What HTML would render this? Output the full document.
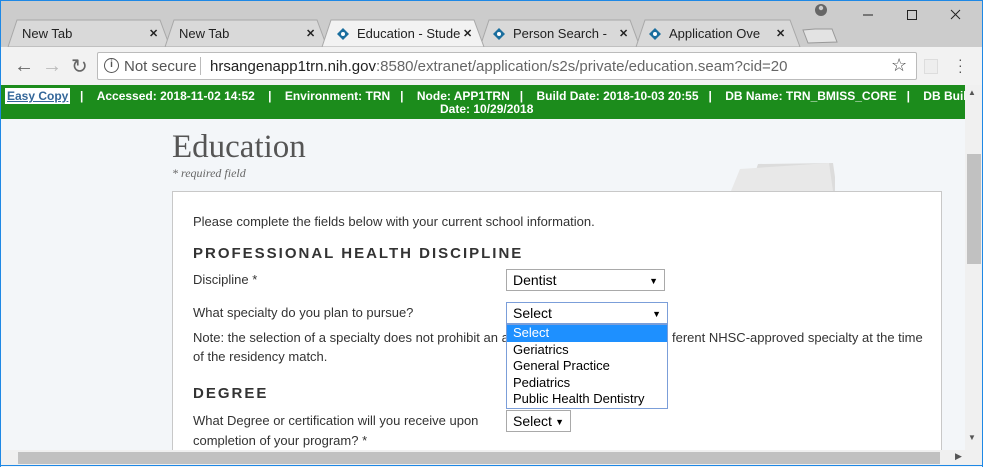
<!DOCTYPE html>
<html><head><style>
*{margin:0;padding:0;box-sizing:border-box}
body{width:983px;height:467px;overflow:hidden;font-family:"Liberation Sans",Arial,sans-serif;background:#f3f6f9;position:relative}
.a{position:absolute}
.tab{position:absolute;top:20px;height:27px;font-size:13px;color:#222;padding:6px 0 0 0;white-space:nowrap}
.x{position:absolute;font-size:11px;top:27px;color:#222;font-weight:bold}
.sel{position:absolute;background:#fff;border:1px solid #a9a9a9;font-size:14px;padding:2px 6px;color:#000}
.ar{position:absolute;right:6px;top:6px;font-size:9px}
.t{position:absolute;font-size:13px;color:#333;white-space:nowrap}
</style></head><body>
<div class="a" style="left:0;top:0;width:983px;height:47px;background:#cccccc;border:1px solid #1e88e5;border-bottom:none"></div>
<svg class="a" style="left:0;top:0" width="983" height="48">
<path d="M8 47 L17 20 L160 20 L170 47Z" fill="#d9d9d9" stroke="#a8a8a8"/>
<path d="M165 47 L174 20 L317 20 L327 47Z" fill="#d9d9d9" stroke="#a8a8a8"/>
<path d="M480 47 L489 20 L630 20 L640 47Z" fill="#d9d9d9" stroke="#a8a8a8"/>
<path d="M636 47 L645 20 L790 20 L800 47Z" fill="#d9d9d9" stroke="#a8a8a8"/>
<path d="M322 47 L331 20 L474 20 L484 47Z" fill="#f2f2f2" stroke="#a8a8a8"/>
<path d="M803 30 L815 29 L832 29 L837 42 L808 43Z" fill="#e3e3e3" stroke="#999"/>
<g fill="#1a6e9e"><path d="M343 28 l6 6 -6 6 -6 -6z"/><path d="M499 28 l6 6 -6 6 -6 -6z"/><path d="M655 28 l6 6 -6 6 -6 -6z"/></g>
<g fill="#fff"><circle cx="343" cy="34" r="2"/><circle cx="499" cy="34" r="2"/><circle cx="655" cy="34" r="2"/></g>
<circle cx="821" cy="10" r="6" fill="#666"/><circle cx="821" cy="8" r="2.2" fill="#ccc"/>
<path d="M863 15h10" stroke="#222"/><rect x="907.5" y="10.5" width="9" height="9" fill="none" stroke="#222"/>
<path d="M951 10l9 9M960 10l-9 9" stroke="#222"/>
</svg>
<div class="tab" style="left:22px">New Tab</div><div class="x" style="left:149px">✕</div>
<div class="tab" style="left:179px">New Tab</div><div class="x" style="left:306px">✕</div>
<div class="tab" style="left:357px;width:103px;overflow:hidden">Education - Studer</div><div class="x" style="left:463px">✕</div>
<div class="tab" style="left:513px;width:97px;overflow:hidden">Person Search - Bl</div><div class="x" style="left:619px">✕</div>
<div class="tab" style="left:669px;width:91px;overflow:hidden">Application Overvi</div><div class="x" style="left:776px">✕</div>
<div class="a" style="left:0;top:47px;width:983px;height:38px;background:#f2f2f2;border-left:1px solid #1e88e5;border-right:1px solid #1e88e5"></div>
<div class="a" style="left:14px;top:55px;font-size:20px;color:#666">←</div>
<div class="a" style="left:42px;top:55px;font-size:20px;color:#bbb">→</div>
<div class="a" style="left:71px;top:54px;font-size:20px;color:#666">↻</div>
<div class="a" style="left:97px;top:52px;width:820px;height:28px;background:#fff;border:1px solid #bbb;border-radius:2px"></div>
<div class="a" style="left:104px;top:58px;width:15px;height:15px;border:1.5px solid #555;border-radius:50%;font-size:10px;text-align:center;line-height:12px;font-weight:bold;color:#555">i</div>
<div class="a" style="left:124px;top:58px;font-size:15px;color:#555">Not secure</div>
<div class="a" style="left:200px;top:57px;width:1px;height:18px;background:#bbb"></div>
<div class="a" style="left:210px;top:58px;font-size:15px;color:#222">hrsangenapp1trn.nih.gov<span style="color:#666">:8580/extranet/application/s2s/private/education.seam?cid=20</span></div>
<div class="a" style="left:891px;top:55px;font-size:18px;color:#444">☆</div>
<div class="a" style="left:924px;top:59px;width:14px;height:15px;background:#eee;border:1px solid #ddd"></div>
<div class="a" style="left:958px;top:56px;font-size:14px;color:#555;line-height:6px">·<br>·<br>·</div>
<div class="a" style="left:1px;top:85px;width:964px;height:34px;background:#1c8c1c"></div>
<div class="a" style="left:5px;top:88px;width:65px;height:16px;background:#fff"></div>
<div class="a" style="left:7px;top:89px;font-size:12px;font-weight:bold;color:#336699;text-decoration:underline">Easy Copy</div>
<div class="a" style="left:80px;top:89px;width:885px;overflow:hidden;font-size:12px;font-weight:bold;color:#fff;white-space:nowrap">|&nbsp;&nbsp;&nbsp;&nbsp;Accessed: 2018-11-02 14:52&nbsp;&nbsp;&nbsp;&nbsp;|&nbsp;&nbsp;&nbsp;&nbsp;Environment: TRN&nbsp;&nbsp;&nbsp;|&nbsp;&nbsp;&nbsp;&nbsp;Node: APP1TRN&nbsp;&nbsp;&nbsp;|&nbsp;&nbsp;&nbsp;&nbsp;Build Date: 2018-10-03 20:55&nbsp;&nbsp;&nbsp;|&nbsp;&nbsp;&nbsp;&nbsp;DB Name: TRN_BMISS_CORE&nbsp;&nbsp;&nbsp;|&nbsp;&nbsp;&nbsp;&nbsp;DB Build</div>
<div class="a" style="left:440px;top:102px;font-size:12px;font-weight:bold;color:#fff">Date: 10/29/2018</div>
<div class="a" style="left:172px;top:129px;font-family:'Liberation Serif',serif;font-size:33px;color:#555">Education</div>
<div class="a" style="left:172px;top:166px;font-family:'Liberation Serif',serif;font-size:12px;font-style:italic;color:#666">* required field</div>
<svg class="a" style="left:725px;top:160px" width="110" height="32"><path d="M33 4 L108 3 L112 31 L24 31Z" fill="#dcdcdc"/><path d="M15 9 L104 3 L108 31 L6 31Z" fill="#e8e8e8"/></svg>
<div class="a" style="left:172px;top:191px;width:770px;height:259px;background:#fff;border:1px solid #c8c8c8;border-bottom:none"></div>
<div class="t" style="left:193px;top:214px">Please complete the fields below with your current school information.</div>
<div class="a" style="left:193px;top:245px;font-size:15px;font-weight:bold;letter-spacing:2px;color:#333">PROFESSIONAL HEALTH DISCIPLINE</div>
<div class="t" style="left:193px;top:272px">Discipline *</div>
<div class="sel" style="left:506px;top:269px;width:159px;height:22px">Dentist<span class="ar">▼</span></div>
<div class="t" style="left:193px;top:305px">What specialty do you plan to pursue?</div>
<div class="t" style="left:193px;top:330px">Note: the selection of a specialty does not prohibit an a</div>
<div class="t" style="left:672px;top:330px">ferent NHSC-approved specialty at the time</div>
<div class="t" style="left:193px;top:349px">of the residency match.</div>
<div class="sel" style="left:506px;top:302px;width:162px;height:22px;border-color:#7b9ed9">Select<span class="ar">▼</span></div>
<div class="a" style="left:506px;top:324px;width:162px;height:85px;background:#fff;border:1px solid #7b9ed9;font-size:13px;line-height:16.5px;color:#000">
<div style="background:#1e90ff;color:#fff;padding-left:6px">Select</div>
<div style="padding-left:6px">Geriatrics</div><div style="padding-left:6px">General Practice</div><div style="padding-left:6px">Pediatrics</div><div style="padding-left:6px">Public Health Dentistry</div></div>
<div class="a" style="left:193px;top:385px;font-size:15px;font-weight:bold;letter-spacing:2px;color:#333">DEGREE</div>
<div class="t" style="left:193px;top:413px">What Degree or certification will you receive upon</div>
<div class="t" style="left:193px;top:433px">completion of your program? *</div>
<div class="sel" style="left:506px;top:410px;width:65px;height:22px">Select<span class="ar">▼</span></div>
<div class="a" style="left:965px;top:85px;width:17px;height:365px;background:#f0f0f0"></div>
<div class="a" style="left:968px;top:88px;font-size:8px;color:#555">▲</div>
<div class="a" style="left:967px;top:154px;width:14px;height:110px;background:#c1c1c1"></div>
<div class="a" style="left:968px;top:433px;font-size:8px;color:#555">▼</div>
<div class="a" style="left:1px;top:450px;width:981px;height:16px;background:#f0f0f0;border-bottom:1px solid #1e88e5"></div>
<div class="a" style="left:18px;top:452px;width:922px;height:12px;background:#c1c1c1"></div>
<div class="a" style="left:955px;top:451px;font-size:9px;color:#555">▶</div>
<div class="a" style="left:0;top:85px;width:1px;height:382px;background:#1e88e5"></div>
<div class="a" style="left:982px;top:85px;width:1px;height:382px;background:#1e88e5"></div>
</body></html>
